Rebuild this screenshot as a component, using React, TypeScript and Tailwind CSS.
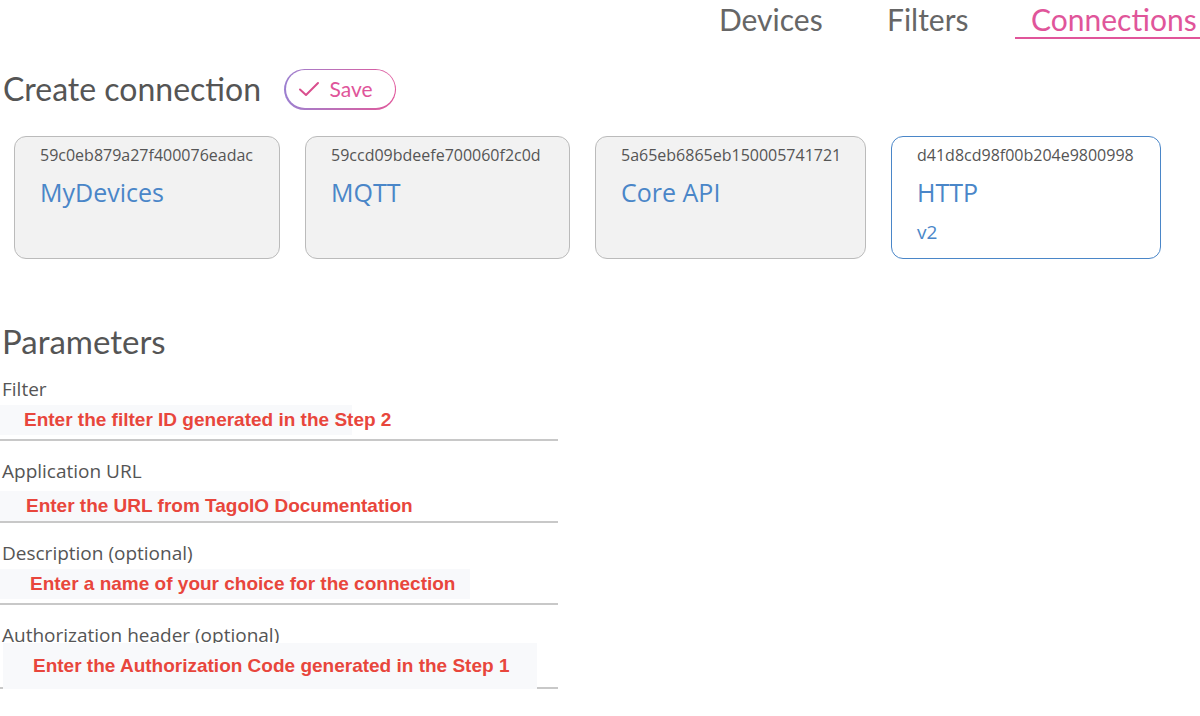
import React from 'react';

const cards = [
  { id: '59c0eb879a27f400076eadac', name: 'MyDevices', w: 'w-[266px]' },
  { id: '59ccd09bdeefe700060f2c0d', name: 'MQTT', w: 'w-[265px]' },
  { id: '5a65eb6865eb150005741721', name: 'Core API', w: 'w-[271px]' },
  { id: 'd41d8cd98f00b204e9800998', name: 'HTTP', version: 'v2', w: 'w-[270px]', active: true },
];

const params = [
  { label: 'Filter', hint: 'Enter the filter ID generated in the Step 2', box: 'w-[352px] h-[30px] pl-[24px]' },
  { label: 'Application URL', hint: 'Enter the URL from TagoIO Documentation', box: 'w-[290px] h-[30px] pl-[26px] mt-[8px]' },
  { label: 'Description (optional)', hint: 'Enter a name of your choice for the connection', box: 'w-[470px] h-[30px] pl-[30px]' },
];

const App: React.FC = () => {
  return (
    <div className="w-[1200px] h-[716px] overflow-hidden bg-white font-['Open_Sans',sans-serif] text-[#555]">
      {/* Tabs */}
      <div className="flex h-[40px] pl-[719px] font-['Lato',sans-serif] text-[30px] text-[#666] leading-none whitespace-nowrap">
        <div className="shrink-0 pt-[4px] w-[168px]">Devices</div>
        <div className="shrink-0 pt-[4px] w-[128px]">Filters</div>
        <div className="shrink-0 pt-[4px] pl-[16px] pr-[20px] border-b-2 border-[#e0559a] text-[#e0559a] h-[39px]">Connections</div>
      </div>

      {/* Header */}
      <div className="flex items-center gap-[23px] pl-[3px] mt-[28px] h-[42px]">
        <h1 className="font-['Lato',sans-serif] text-[32px] text-[#555] leading-none">Create connection</h1>
        <div className="rounded-full p-[1.5px] bg-gradient-to-r from-[#9b7fd0] to-[#e0559a]">
          <div className="flex items-center gap-[10px] h-[38px] pl-[12px] pr-[22px] rounded-full bg-white">
            <svg width="22" height="16" viewBox="0 0 22 16" fill="none">
              <path d="M2 8.5 L8 14 L20 2" stroke="#d94f8e" strokeWidth="2" strokeLinecap="round" strokeLinejoin="round" />
            </svg>
            <span className="font-['Lato',sans-serif] text-[21px] text-[#e0559a]">Save</span>
          </div>
        </div>
      </div>

      {/* Cards */}
      <div className="flex gap-[25px] pl-[14px] mt-[26px]">
        {cards.map(c => (
          <div
            key={c.id}
            className={`${c.w} h-[123px] rounded-[12px] border px-[25px] pt-[8px] ${
              c.active ? 'bg-white border-[#4a86c8]' : 'bg-[#f2f2f2] border-[#bbbbbb]'
            }`}
          >
            <div className="text-[16px] text-[#555] leading-[20px]">{c.id}</div>
            <div className="mt-[12px] text-[25px] text-[#4a86c8] leading-[30px]">{c.name}</div>
            {c.version && <div className="mt-[13px] text-[19px] text-[#4a86c8] leading-[24px]">{c.version}</div>}
          </div>
        ))}
      </div>

      {/* Parameters */}
      <h2 className="mt-[62px] pl-[2px] font-['Lato',sans-serif] text-[33px] text-[#555] leading-[40px]">Parameters</h2>

      <div className="w-[558px] mt-[16px]">
        {params.map(p => (
          <div key={p.label} className="mb-[18px]">
            <div className="pl-[2px] text-[19px] text-[#555] leading-[24px]">{p.label}</div>
            <div className="h-[40px] flex items-center border-b-2 border-[#c8c8c8]">
              <div className={`${p.box} bg-[#f8f9fb] flex items-center`}>
                <span className="font-['Liberation_Sans',Arial,sans-serif] font-bold text-[19px] text-[#e8463c] whitespace-nowrap">{p.hint}</span>
              </div>
            </div>
          </div>
        ))}

        <div className="h-[24px] pl-[2px] text-[19px] text-[#555] leading-[24px]">Authorization header (optional)</div>
        <div className="relative border-b-2 border-[#c8c8c8] h-[42px]">
          <div className="absolute left-[3px] -top-[4px] w-[534px] h-[46px] bg-[#f8f9fb] flex items-center pl-[30px]">
            <span className="font-['Liberation_Sans',Arial,sans-serif] font-bold text-[19px] text-[#e8463c] whitespace-nowrap">Enter the Authorization Code generated in the Step 1</span>
          </div>
        </div>
      </div>
    </div>
  );
};

export default App;
